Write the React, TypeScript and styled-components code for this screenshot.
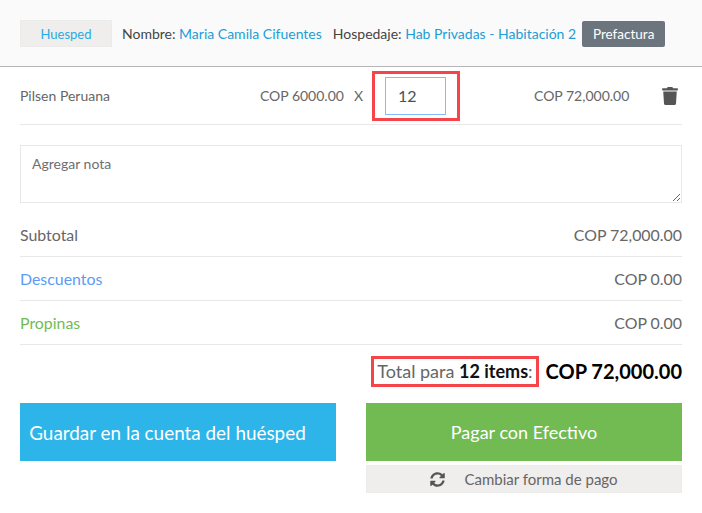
import styled, { createGlobalStyle } from 'styled-components'
import { FaSyncAlt, FaTrash } from 'react-icons/fa'

const GlobalStyle = createGlobalStyle`
  html, body {
    margin: 0;
    background: #ffffff;
    font-family: Lato, "Open Sans", sans-serif;
    color: #666666;
  }
  * { box-sizing: border-box; }
`

const Header = styled.header`
  display: flex;
  align-items: center;
  height: 67px;
  padding: 20px 20px 19px;
  background: #fafafa;
  border-bottom: 1px solid #b5b5b5;
  font-size: 14px;
  color: #444444;
`

const GuestTab = styled.div`
  display: flex;
  align-items: center;
  justify-content: center;
  width: 92px;
  height: 27px;
  margin-right: 10px;
  background: #f0eded;
  border: 1px solid #ebebeb;
  color: #29abe2;
  font-size: 13px;
`

const Info = styled.span<{ $gap: number }>`
  margin-right: ${({ $gap }) => $gap}px;
  white-space: nowrap;
`

const InfoLink = styled.span`
  color: #1b9ed6;
`

const PrefacturaButton = styled.button`
  width: 83px;
  height: 26px;
  padding: 0;
  border: none;
  border-radius: 2px;
  background: #6c757d;
  color: #ffffff;
  font: inherit;
  font-size: 13.5px;
`

const Content = styled.main`
  padding: 0 20px;
`

const ItemRow = styled.div`
  display: flex;
  align-items: center;
  height: 58px;
  border-bottom: 1px solid #e8e8e8;
  font-size: 14px;
`

const ItemName = styled.span`
  flex: 1;
`

const ItemTimes = styled.span`
  margin: 0 9px 0 10px;
`

const Highlight = styled.div`
  border: 3px solid #f6444b;
`

const QuantityBox = styled(Highlight)`
  flex: none;
  width: 88px;
  height: 50px;
  padding: 3px 11px 3px 10px;
`

const QuantityInput = styled.input`
  display: block;
  width: 61px;
  height: 38px;
  padding: 0 12px;
  border: 1px solid #80bdff;
  outline: none;
  color: #495057;
  font: inherit;
  font-size: 16px;
`

const ItemTotal = styled.span`
  flex: none;
  margin-left: 74px;
  width: 95px;
  white-space: nowrap;
`

const DeleteIcon = styled(FaTrash)`
  flex: none;
  margin-left: 33px;
  margin-right: 4px;
  width: 16px;
  height: 18px;
  color: #555555;
`

const NoteInput = styled.textarea`
  display: block;
  width: 100%;
  height: 58px;
  margin-top: 20px;
  margin-bottom: 10px;
  padding: 9px 11px;
  border: 1px solid #e8e8e8;
  outline: none;
  font: inherit;
  font-size: 14px;
  &::placeholder {
    color: #6f6f6f;
    opacity: 1;
  }
`

const SummaryRow = styled.div`
  display: flex;
  align-items: center;
  justify-content: space-between;
  height: 44px;
  border-bottom: 1px solid #e8e8e8;
  font-size: 15.9px;
`

const SummaryLabel = styled.span<{ $color: string }>`
  color: ${({ $color }) => $color};
`

const TotalRow = styled.div`
  display: flex;
  align-items: center;
  justify-content: flex-end;
  height: 58px;
  padding-bottom: 6px;
`

const TotalBox = styled(Highlight)`
  display: flex;
  align-items: center;
  height: 31px;
  padding: 0 3px;
  font-size: 18px;
  white-space: pre;
`

const TotalCount = styled.b`
  color: #111111;
  font-weight: 700;
`

const TotalAmount = styled.strong`
  margin-left: 7px;
  color: #000000;
  font-size: 20px;
`

const Actions = styled.div`
  display: grid;
  grid-template-columns: 316px 316px;
  justify-content: space-between;
  align-items: start;
`

const PayColumn = styled.div`
  display: flex;
  flex-direction: column;
  gap: 4px;
`

const BigButton = styled.button<{ $color: string }>`
  height: 58px;
  padding: 0;
  border: none;
  background: ${({ $color }) => $color};
  color: #ffffff;
  font: inherit;
  font-size: 18px;
`

const SaveButton = styled(BigButton)`
  padding-right: 21px;
  font-size: 18.9px;
  white-space: nowrap;
`

const ChangeButton = styled.button`
  display: flex;
  align-items: center;
  justify-content: center;
  gap: 19px;
  height: 28px;
  padding: 0;
  border: 1px solid #ebebeb;
  background: #f0eded;
  color: #666666;
  font: inherit;
  font-size: 15px;
`

const ChangeIcon = styled(FaSyncAlt)`
  width: 15px;
  height: 15px;
  color: #555555;
`

export default function App() {
  return (
    <>
      <GlobalStyle />
      <Header>
        <GuestTab>Huesped</GuestTab>
        <Info $gap={11}>
          Nombre: <InfoLink>Maria Camila Cifuentes</InfoLink>
        </Info>
        <Info $gap={6}>
          Hospedaje: <InfoLink>Hab Privadas - Habitación 2</InfoLink>
        </Info>
        <PrefacturaButton>Prefactura</PrefacturaButton>
      </Header>
      <Content>
        <ItemRow>
          <ItemName>Pilsen Peruana</ItemName>
          <span>COP 6000.00</span>
          <ItemTimes>X</ItemTimes>
          <QuantityBox>
            <QuantityInput defaultValue='12' />
          </QuantityBox>
          <ItemTotal>COP 72,000.00</ItemTotal>
          <DeleteIcon />
        </ItemRow>
        <NoteInput placeholder='Agregar nota' />
        <SummaryRow>
          <SummaryLabel $color='#666666'>Subtotal</SummaryLabel>
          <span>COP 72,000.00</span>
        </SummaryRow>
        <SummaryRow>
          <SummaryLabel $color='#5b9bf5'>Descuentos</SummaryLabel>
          <span>COP 0.00</span>
        </SummaryRow>
        <SummaryRow>
          <SummaryLabel $color='#72bb53'>Propinas</SummaryLabel>
          <span>COP 0.00</span>
        </SummaryRow>
        <TotalRow>
          <TotalBox>
            Total para <TotalCount>12 items</TotalCount>:
          </TotalBox>
          <TotalAmount>COP 72,000.00</TotalAmount>
        </TotalRow>
        <Actions>
          <SaveButton $color='#2db5ea'>Guardar en la cuenta del huésped</SaveButton>
          <PayColumn>
            <BigButton $color='#72bb53'>Pagar con Efectivo</BigButton>
            <ChangeButton>
              <ChangeIcon />
              Cambiar forma de pago
            </ChangeButton>
          </PayColumn>
        </Actions>
      </Content>
    </>
  )
}
